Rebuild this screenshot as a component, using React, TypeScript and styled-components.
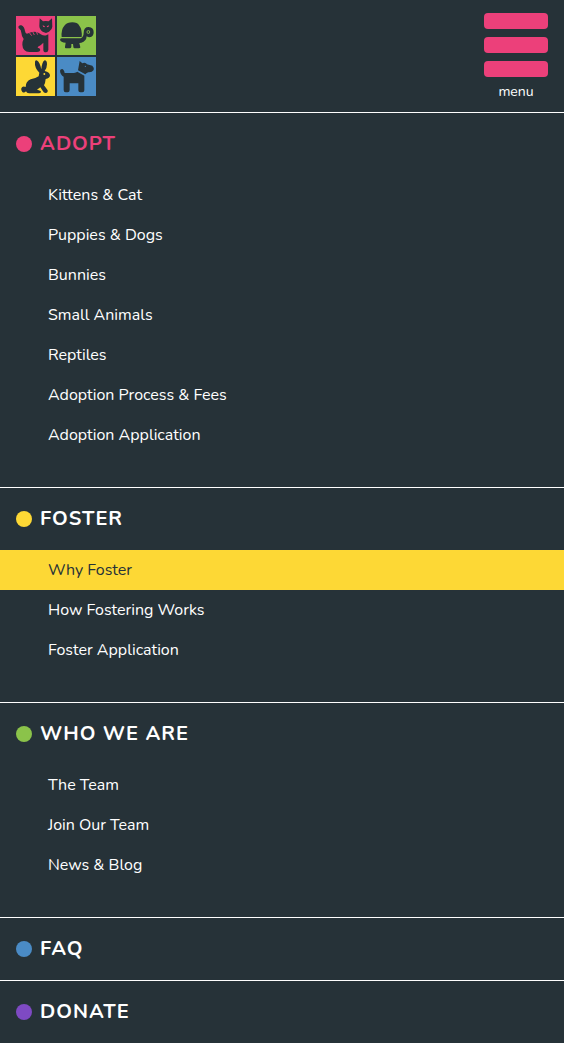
import React from 'react';
import styled, { createGlobalStyle } from 'styled-components';

const ink = '#263238';
const pink = '#ec407a';
const yellow = '#fdd835';
const green = '#8bc34a';
const blue = '#4a8bc5';
const purple = '#7e4ac3';

const GlobalStyle = createGlobalStyle`
  *, *::before, *::after { box-sizing: border-box; }
  body {
    margin: 0;
    background: ${ink};
    color: #fff;
    font-family: Nunito, Lato, 'Open Sans', sans-serif;
    font-size: 16px;
  }
`;

const Page = styled.div`
  display: flex;
  flex-direction: column;
  min-height: 1043px;
  background: ${ink};
`;

const Header = styled.header`
  display: flex;
  justify-content: space-between;
  height: 112px;
  padding: 0 16px;
`;

const LogoMark = styled.svg`
  display: block;
  width: 80px;
  height: 80px;
  margin-top: 16px;
`;

const MenuButton = styled.button`
  display: flex;
  flex-direction: column;
  align-items: center;
  gap: 8px;
  width: 64px;
  padding: 13px 0 0;
  border: 0;
  background: none;
  color: #fff;
  font: inherit;
`;

const Bar = styled.span`
  width: 64px;
  height: 16px;
  border-radius: 4px;
  background: ${pink};
`;

const MenuLabel = styled.span`
  margin-top: -2px;
  font-size: 14px;
  line-height: 18px;
`;

const Section = styled.section`
  border-top: 1px solid #fff;
`;

const Heading = styled.h2<{ $color?: string }>`
  display: flex;
  align-items: center;
  gap: 8px;
  height: 62px;
  margin: 0;
  padding: 0 16px;
  color: ${(p) => p.$color ?? '#fff'};
  font-size: 20px;
  font-weight: 700;
  line-height: 30px;
  letter-spacing: 1px;
`;

const Dot = styled.span<{ $color: string }>`
  width: 16px;
  height: 16px;
  border-radius: 50%;
  background: ${(p) => p.$color};
`;

const List = styled.ul`
  margin: 0;
  padding: 0 0 32px;
  list-style: none;
`;

const Item = styled.li<{ $active?: boolean }>`
  height: 40px;
  padding-left: 48px;
  background: ${(p) => (p.$active ? yellow : 'transparent')};
  color: ${(p) => (p.$active ? ink : '#fff')};
  line-height: 40px;
`;

function Logo() {
  return (
    <LogoMark viewBox="18 18 240 240" aria-label="Animal rescue" fill={ink}>
      <rect x="18" y="18" width="117" height="117" fill={pink} />
      <rect x="141" y="18" width="117" height="117" fill={green} />
      <rect x="18" y="141" width="117" height="117" fill={yellow} />
      <rect x="141" y="141" width="117" height="117" fill={blue} />
      {/* cat */}
      <path d="M89 25 L99 34 Q107 32 116 34 L126 25 L127 50 Q127 58 117 65 L108 69 L98 65 Q88 58 88 48 Z" />
      <path d="M25 50 Q27 44 34 46 Q43 50 45 63 Q47 75 55 70 Q65 64 79 66 Q88 68 92 73 Q101 78 109 76 L115 73 L115 120 Q114 127 108 127 Q100 127 100 119 L100 98 Q93 106 84 110 L83 113 Q91 114 91 120 Q90 126 81 126 L58 126 Q38 124 37 104 Q37 94 41 87 Q35 80 34 68 Q33 59 29 57 Q25 55 25 50 Z" />
      <path d="M58 68 L65 77 M68 65 L73 75 M79 65 L83 74" stroke={pink} strokeWidth="2.5" fill="none" />
      <path d="M98 46 L105 49 L103 52 Q98 52 98 46 Z M117 46 L110 49 L112 52 Q117 52 117 46 Z" fill={pink} />
      {/* tortoise */}
      <path d="M155 81 Q153 58 163 47 Q172 37 187 37 Q202 37 208 47 Q217 58 215 81 Z" />
      <path d="M156 85 H212 Q221 81 221 68 Q221 51 236 51 Q251 52 251 67 Q251 81 239 82 Q234 82 230 79 Q229 94 214 98 L208 99 L211 112 Q211 115 206 115 H194 Q190 115 190 110 L189 102 H184 L184 111 Q183 115 179 115 H168 Q164 115 165 110 L167 98 Q152 97 150 89 Q151 85 156 85 Z" />
      <circle cx="235" cy="66" r="5.500" fill={green} />
      <circle cx="235" cy="66" r="2.800" />
      {/* rabbit */}
      <path d="M88 188 Q73 173 75 155 Q77 149 82 152 Q89 155 94 178 Q96 155 104 151 Q111 151 111 163 Q111 174 104 183 Q120 187 120 197 Q119 204 107 207 Q106 219 102 226 L113 241 Q114 249 107 249 Q101 249 99 244 L91 232 L81 239 Q93 241 93 246 Q92 250 86 250 H57 Q50 250 48 244 Q43 250 37 246 Q32 242 34 235 Q37 227 47 231 Q47 214 62 208 Q74 207 86 199 Z" />
      <circle cx="103" cy="192" r="2.800" fill={yellow} />
      {/* dog */}
      <path d="M209 153 L217 160 L223 158 Q229 159 231 163 L247 167 Q253 173 251 180 Q246 188 235 187 Q230 189 226 193 L204 181 Z" />
      <path d="M150 182 Q151 177 156 177 Q162 178 164 189 H192 Q199 188 202 185 L223 197 L223 203 V241 Q223 247 217 247 H211 Q205 247 205 241 V220 H179 V240 Q179 247 173 247 H167 Q161 247 161 240 V200 Q151 194 150 182 Z" />
      <circle cx="226" cy="169" r="1.800" fill={blue} />
    </LogoMark>
  );
}

type Entry = { label: string; active?: boolean };
type Group = { title: string; dot: string; color?: string; items: Entry[] };

const groups: Group[] = [
  {
    title: 'ADOPT', dot: pink, color: pink,
    items: [
      { label: 'Kittens & Cat' },
      { label: 'Puppies & Dogs' },
      { label: 'Bunnies' },
      { label: 'Small Animals' },
      { label: 'Reptiles' },
      { label: 'Adoption Process & Fees' },
      { label: 'Adoption Application' },
    ],
  },
  {
    title: 'FOSTER', dot: yellow,
    items: [
      { label: 'Why Foster', active: true },
      { label: 'How Fostering Works' },
      { label: 'Foster Application' },
    ],
  },
  {
    title: 'WHO WE ARE', dot: green,
    items: [{ label: 'The Team' }, { label: 'Join Our Team' }, { label: 'News & Blog' }],
  },
  { title: 'FAQ', dot: blue, items: [] },
  { title: 'DONATE', dot: purple, items: [] },
];

export default function App() {
  return (
    <Page>
      <GlobalStyle />
      <Header>
        <Logo />
        <MenuButton>
          <Bar />
          <Bar />
          <Bar />
          <MenuLabel>menu</MenuLabel>
        </MenuButton>
      </Header>
      <nav>
        {groups.map((g) => (
          <Section key={g.title}>
            <Heading $color={g.color}>
              <Dot $color={g.dot} />
              {g.title}
            </Heading>
            {g.items.length > 0 && (
              <List>
                {g.items.map((it) => (
                  <Item key={it.label} $active={it.active}>{it.label}</Item>
                ))}
              </List>
            )}
          </Section>
        ))}
      </nav>
    </Page>
  );
}
